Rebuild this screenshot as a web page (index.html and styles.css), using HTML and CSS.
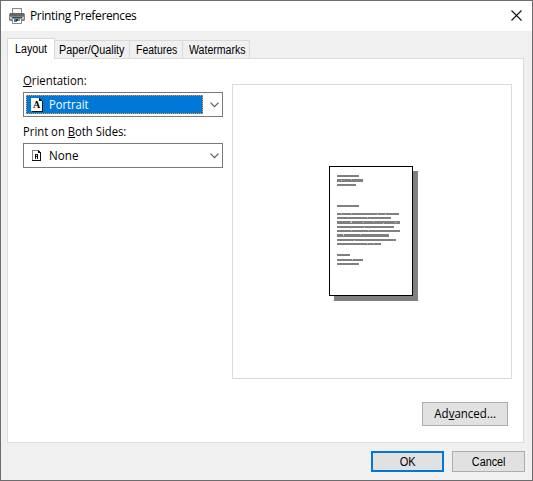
FILE: index.html
```
<!DOCTYPE html>
<html lang="en">
<head>
<meta charset="utf-8">
<title>Printing Preferences</title>
<link rel="stylesheet" href="styles.css">
</head>
<body>
<div class="window">
  <header class="titlebar">
    <svg class="printer" width="16" height="16" viewBox="0 0 16 16">
      <path fill="#8a8a8a" d="M3 0h10v5H3z"/><path fill="#f8f8f8" d="M4 1h8v4H4z"/>
      <rect x="0" y="5" width="16" height="8" rx="1.500" fill="#858585"/>
      <path fill="#666" d="M1 5h14v3H1z"/><path fill="#c8c8c8" d="M1 9h14v2H1z"/>
      <path fill="#444" d="M3 9h10v1H3z"/><path fill="#fff" stroke="#888" d="M3.500 10.500h9v5h-9z"/>
      <path fill="#2584c4" d="M5 11h3v3H5z"/><path fill="#163f82" d="M7 11h2v2H7z"/><path fill="#62a777" d="M9 11h2v2H9z"/>
    </svg>
    <h1 class="title"><span class="t-title">Printing Preferences</span></h1>
    <svg class="close" width="11" height="11" viewBox="0 0 11 11"><path d="M.5.5l10 10M10.500.5l-10 10" stroke="#111" stroke-width="1.100"/></svg>
  </header>
  <nav class="tabs">
    <div class="tab active"><span class="t-layout">Layout</span></div>
    <div class="tab paper"><span class="t-paper">Paper/Quality</span></div>
    <div class="tab features"><span class="t-features">Features</span></div>
    <div class="tab watermarks"><span class="t-water">Watermarks</span></div>
  </nav>
  <main class="panel">
    <section class="settings">
      <div class="label"><span class="t-orient"><u>O</u>rientation:</span></div>
      <div class="combo">
        <div class="value selected">
          <svg width="12" height="14" viewBox="0 0 12 14" shape-rendering="crispEdges"><path fill="#111" d="M1 1h8l3 3v10H1z"/><path fill="#fff" d="M0 0h8v3h3v10H0z"/><path fill="#111" d="M8 0h1v1h1v1h1v1H8z"/></svg>
          <b class="glyph">A</b>
          <span class="t-portrait">Portrait</span>
        </div>
        <svg class="chevron" width="9" height="6" viewBox="0 0 9 6"><path d="M.5.7l4 4 4-4" fill="none" stroke="#555" stroke-width="1.100"/></svg>
      </div>
      <div class="label second"><span class="t-sides">Print on <u>B</u>oth Sides:</span></div>
      <div class="combo">
        <div class="value">
          <svg class="small-page" width="9" height="11" viewBox="0 0 9 11" shape-rendering="crispEdges"><path fill="#808080" d="M0 0h6v1H1v10H0z"/><path fill="#111" d="M6 0h1v1h1v1h1v9H0v-1h8V3H6z"/><path fill="#111" d="M3 4h3v5H5V7H4v2H3z"/><path fill="#fff" d="M4 5h1v1H4z"/></svg>
          <span class="t-none">None</span>
        </div>
        <svg class="chevron" width="9" height="6" viewBox="0 0 9 6"><path d="M.5.7l4 4 4-4" fill="none" stroke="#555" stroke-width="1.100"/></svg>
      </div>
    </section>
    <section class="right">
      <div class="preview">
        <svg width="89" height="135" viewBox="0 0 89 135" shape-rendering="crispEdges">
          <path fill="#808080" d="M5 5h84v130H5z"/><path d="M0 0h84v130H0z"/><path fill="#fff" d="M1 1h82v128H1z"/>
          <path fill="#808080" d="M8 9h22v2H8zM8 13h26v3H8zM8 18h19v2H8zM8 39h22v2H8zM8 47h62v2H8zM8 51h54v2H8zM8 55h63v3H8zM8 60h57v2H8zM8 64h63v2H8zM8 68h52v3H8zM8 73h59v2H8zM8 77h44v2H8zM8 88h13v2H8zM8 93h26v2H8zM8 97h22v2H8z"/>
          <path fill="#c8c8c8" d="M12 14h1v1h-1zM22 13h1v1h-1zM12 47h1v1h-1zM22 47h1v1h-1zM48 48h1v1h-1zM56 48h1v1h-1zM38 51h1v1h-1zM22 55h1v1h-1zM21 56h2v1h-2zM44 55h1v1h-1zM34 56h1v1h-1zM54 57h1v1h-1zM66 56h1v1h-1zM35 61h1v1h-1zM22 64h1v1h-1zM39 64h1v1h-1zM14 68h1v2h-1zM31 68h1v1h-1zM25 74h1v1h-1zM38 77h1v1h-1zM44 77h1v1h-1zM23 93h1v1h-1z"/>
        </svg>
      </div>
      <button class="button advanced"><span class="t-advanced">Ad<u>v</u>anced...</span></button>
    </section>
  </main>
  <footer class="actions">
    <button class="button primary"><span class="t-ok">OK</span></button>
    <button class="button"><span class="t-cancel">Cancel</span></button>
  </footer>
</div>
</body>
</html>
```
FILE: styles.css
```
* { box-sizing: border-box; }
body { margin: 0; }
.window {
  width: 533px; height: 481px; border: 1px solid #6e6c6d;
  background: #f0f0f0; color: #000; font: 12px/16px "Open Sans", sans-serif;
  display: flex; flex-direction: column;
}
.window span { white-space: nowrap; display: inline-block; transform-origin: left; }
u { text-decoration: underline; text-decoration-thickness: 1px; text-underline-offset: 1px; }
.titlebar { height: 30px; flex: none; background: #fff; display: flex; align-items: center; padding: 0 10px 2px 8px; }
.printer { position: relative; top: 1px; }
.title { margin: 2px auto 0 5px; font: inherit; }
.tabs { height: 27px; flex: none; display: flex; align-items: flex-end; padding-left: 6px; font: 12px/16px "Liberation Sans", sans-serif; }
.tab { height: 18px; border: 1px solid #d9d9d9; border-bottom: 0; border-left: 0; padding: 1px 0 0 4px; }
.tab.active { width: 48px; height: 21px; background: #fff; border-left: 1px solid #d9d9d9; margin-bottom: -1px; padding: 2px 0 0 7px; position: relative; }
.paper { width: 75px; }
.features { width: 53px; padding-left: 6px; }
.watermarks { width: 67px; padding-left: 6px; }
.panel { width: 517px; height: 385px; flex: none; margin-left: 6px; background: #fff; border: 1px solid #dcdcdc; display: flex; padding: 14px 11px 0 15px; }
.settings { width: 200px; flex: none; }
.label { height: 19px; }
.second { margin-top: 7px; }
.combo { width: 200px; height: 25px; border: 1px solid #7a7a7a; display: flex; align-items: center; padding: 0 4px 0 2px; }
.value { width: 177px; height: 19px; display: flex; align-items: center; padding-left: 5px; position: relative; }
.selected { background: #0078d7; color: #fff; outline: 1px dotted #f89638; outline-offset: -1px; }
.value span { margin-left: 6px; }
.value .small-page + span { margin-left: 8px; }
.small-page { margin-left: 1px; }
.glyph { position: absolute; left: 7px; top: 2px; color: #000; font: bold 10px/15px "Liberation Serif", serif; }
.chevron { margin: 0 -1px 0 auto; }
.right { margin-left: 9px; width: 280px; display: flex; flex-direction: column; align-items: flex-end; padding-top: 11px; }
.preview { width: 280px; height: 295px; flex: none; border: 1px solid #dcdcdc; padding: 81px 0 0 96px; }
.preview svg { display: block; }
.button { width: 73px; height: 21px; padding: 0; margin: 0; border: 1px solid #adadad; background: #e1e1e1; color: #000; font: 12px/16px "Liberation Sans", sans-serif; display: flex; align-items: center; justify-content: center; }
.button span { transform-origin: center; }
.advanced { width: 86px; height: 24px; margin: 23px 4px 0 0; font-family: "Open Sans", sans-serif; }
.primary { border: 2px solid #0078d7; }
.actions { display: flex; justify-content: flex-end; gap: 8px; padding: 8px 7px 0 0; }
.window .t-title { letter-spacing: -0.36px; }
.window .t-layout { transform: scaleX(.89); }
.window .t-paper { transform: scaleX(.9); }
.window .t-features { transform: scaleX(.87); }
.window .t-water { transform: scaleX(.88); }
.window .t-orient { transform: scaleX(.945); }
.window .t-sides { transform: scaleX(.94); }
.window .t-portrait { transform: scaleX(.93); }
.window .t-none { transform: scaleX(.97); }
.window .t-advanced { transform: scaleX(.96); }
.window .t-ok { transform: scaleX(.92); }
.window .t-cancel { transform: scaleX(.9); }
```
